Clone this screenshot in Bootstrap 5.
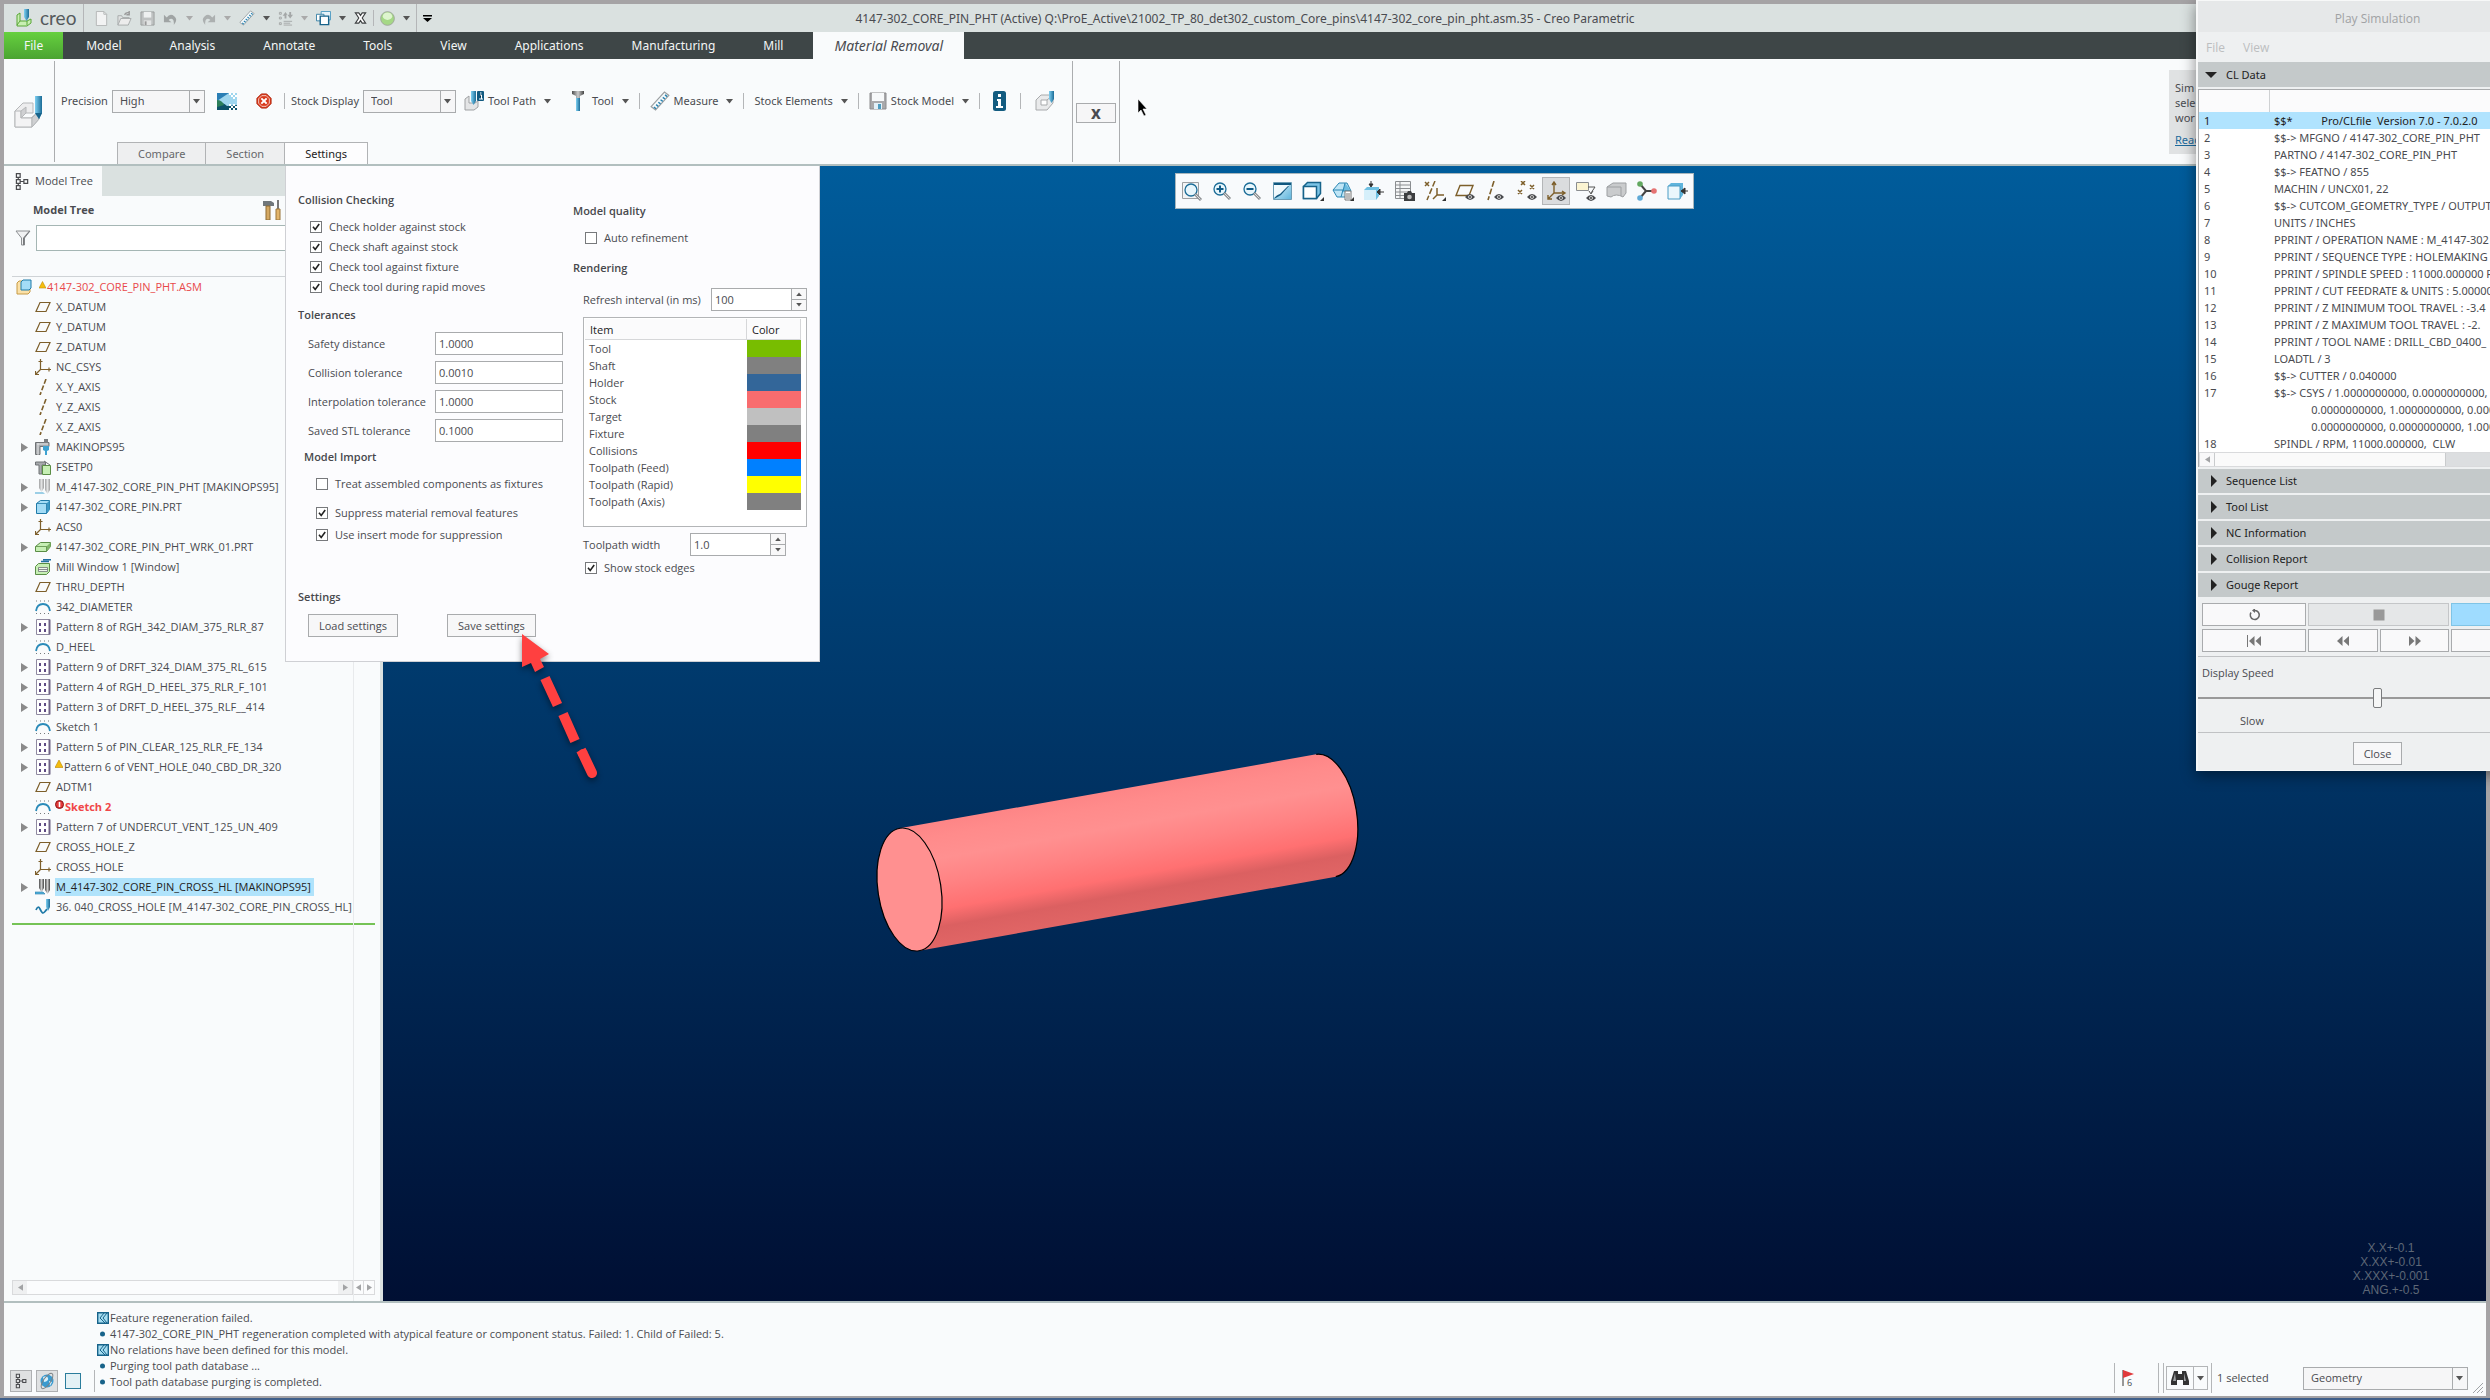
<!DOCTYPE html>
<html lang="en">
<head>
<meta charset="utf-8">
<meta name="viewport" content="width=device-width, initial-scale=1">
<title>4147-302_CORE_PIN_PHT (Active) - Creo Parametric</title>
<link rel="stylesheet" href="https://cdn.jsdelivr.net/npm/bootstrap@5.3.0/dist/css/bootstrap.min.css">
<style>
:root{--ink:#4a4b50;--line:#b3b5b7;--paper:#f9fbfc;--bar:#dae1e0;--small:11px}
html,body{height:100%}
body{font-family:"Open Sans","Noto Sans",sans-serif;font-size:var(--small);line-height:16px;color:var(--ink);background:#3f5f8a;overflow:hidden}
button,input,select{font:inherit;color:inherit}
svg{display:block;flex:none}
header,.cldata,.acc{font-family:"Noto Sans","Open Sans",sans-serif}
.frame{border:4px solid #a5a3a5;border-bottom-width:2px;background:var(--paper);height:100%}
.shell{padding-bottom:2px;height:100vh}
.plain{border:0;background:none;padding:0;display:flex;align-items:center}
.i15{width:15px;height:15px}.i16{width:16px;height:16px}.i20{width:20px;height:20px}
.caret{width:7px;height:5px;fill:#555}
.caret.dim{fill:#aaa}
.sep{width:1px;height:16px;background:#b4b6b8;flex:none}
/* title bar */
.titlebar{height:28px;background:var(--bar)}
.quick{gap:8px;padding-left:12px;flex:1 0 0}
.quick-end{padding-left:12px;flex:1 0 0}
.brand{font-family:Lato,"Open Sans",sans-serif;font-size:19px;line-height:24px;color:#555a5c;width:37px}
.titlebar .sep{height:28px;margin:0 -2px}
.titlebar .sep.short{height:16px}
.apptitle{font-size:12px;padding-top:1px}
/* menu */
.menubar{background:#3e4647;height:27px;font-size:12px}
.menubar a{color:#f4f6f6;text-decoration:none;padding:1px 24px 0;height:27px;display:flex;align-items:center}
.menubar a.filetab{background:linear-gradient(#66d03f,#4aa431);padding:1px 20px 0;margin-right:-1px}
.menubar a.current{background:var(--paper);color:var(--ink);font-style:italic;font-size:14px;padding:1px 21px 0;margin-left:6px}
/* ribbon */
.ribbon{height:107px;border-bottom:2px solid #b2bfbf}
.ribbon .vrule{width:1px;background:#abadaf;margin:2px 0;flex:none}
.tools{height:84px;padding-top:1px}
.pick{position:relative;display:inline-block}
.pick select{appearance:none;height:23px;border:1px solid #a9abad;border-radius:0;background:#f6f6f7;padding:0 24px 0 7px;width:100%;display:block}
.pick svg{position:absolute;right:5px;top:9px;pointer-events:none}
.pick::after{content:"";position:absolute;right:15px;top:1px;bottom:1px;width:1px;background:#a9abad}
.subtabs{padding-left:62px;height:22px}
.subtabs a{border:1px solid #b1b3b5;border-bottom:0;background:#eeeff0;color:#66676b;text-decoration:none;padding:1px 20px 0;margin-right:-1px;display:flex;align-items:center}
.subtabs a.current{background:#fdfdfe;color:#222}
.xbox{width:40px;height:20px;border:1px solid #a9abad;background:#f6f6f7;font-weight:700;font-size:17px;line-height:16px;padding:0;margin-top:44px}
.hint{background:#e0e2e3;width:317px;padding:10px 6px;margin:11px 0 10px;line-height:15px}
.hint a{color:#1d6a9c}
/* tree */
.side{width:379px;border-right:3px solid var(--bar);flex:none;position:relative}
.paneltab{width:98px;height:30px;padding-left:11px;gap:5px;background:var(--paper)}
.tabfill{background:var(--bar)}
.finder{height:26px;border:1px solid #a5b6b4;background:#fff;flex:1;min-width:0}
.treehead{border-bottom:1px solid #cfd3d6;margin-left:8px;height:26px}
.tree{list-style:none;margin:0;padding:0 0 0 17px}
.tree li{height:20px;display:flex;align-items:center;white-space:nowrap}
.tree .tw{width:14px;flex:none}
.tree .tw svg{width:7px;height:9px;fill:#8a8a8a}
.tree .i16{margin-right:4px}
.tree span.t{padding:0 3px 0 1px;line-height:18px}
.tree li.sel span.t{background:#b0e3fb;color:#222}
.tree li.root{margin-left:-5px;color:#e8494b}
.rule-green{height:2px;background:#76c356;margin:6px 5px 0 8px}
.colline{position:absolute;top:110px;bottom:0;right:26px;width:1px;background:#e8eaec}
.sb{height:15px;border:1px solid #d9dadc;background:#fbfcfd}
.sb button{width:14px;border:0;background:#eff0f1;padding:0;display:flex;align-items:center;justify-content:center}
.sb svg,.mini svg{width:5px;height:7px;fill:#a2a3a5}
.mini{width:12px;height:15px;border:1px solid #d9dadc;background:#fbfcfd;padding:0;display:flex;align-items:center;justify-content:center;margin-left:-1px}
/* viewport */
.viewport3d{position:relative;background:linear-gradient(#005c9b,#000f33);overflow:hidden}
.solid{position:absolute;left:480px;top:570px}
.viewbar{position:absolute;left:792px;top:7px;width:519px;height:36px;background:#f8fafc;border:1px solid #a8b6bc;padding:0 1px}
.viewbar button{width:29px;height:34px;justify-content:center}
.viewbar button.on>span{background:#dadcde;border:1px solid #b4b6b8}
.viewbar button>span{padding:3px 2px;border:1px solid transparent}
.viewbar svg{width:22px;height:20px}
.tols{position:absolute;right:47px;bottom:4px;width:96px;text-align:center;font:12px/14px "Liberation Sans",Arial,sans-serif;color:#5d6776}
/* settings panel */
.setpanel{position:absolute;left:285px;top:166px;width:535px;background:#fcfcfe;border:1px solid #cfd0d4;border-top:0;z-index:5;padding:0 12px 24px}
.setpanel h2{font-size:var(--small);line-height:20px;font-weight:600;margin:0;color:#47484c}
.ck{height:20px;display:flex;align-items:center;gap:7px;margin:0}
.ck input{appearance:none;width:12px;height:12px;border:1px solid #77797c;background:#fff;margin:0;flex:none}
.ck input:checked{background:#fff url("data:image/svg+xml,%3Csvg xmlns='http://www.w3.org/2000/svg' viewBox='0 0 10 10'%3E%3Cpath d='M2 4.8l2.2 2.6L8.2 2' fill='none' stroke='%23222' stroke-width='1.6'/%3E%3C/svg%3E")}
.fld{height:23px;border:1px solid #a9abad;background:#fff;border-radius:0;padding:0 3px;width:128px}
.tolrow{height:29px}
.tolrow label{width:127px}
.spin{width:96px;height:23px}
.spin input{width:81px}
.spin button{width:16px;height:12px;border:1px solid #a9abad;background:#f8f8f9;padding:0;display:flex;align-items:center;justify-content:center}
.spin button+button{margin-top:-1px}
.spin svg{width:6px;height:4px;fill:#555}
.btnflat{height:23px;border:1px solid #a9abad;background:#f7f7f8;padding:0 10px;border-radius:0;white-space:nowrap}
.listbox{border:1px solid #b3b5b7;background:#fff;height:210px;padding:1px 5px 0 1px}
.listbox table{width:100%;border-collapse:collapse;line-height:17px}
.listbox th{font-weight:400;color:#222;height:20px;border-right:1px solid #d6d7d9;border-bottom:1px solid #d6d7d9;background:#fbfbfc;padding:1px 5px 0}
.listbox td{padding:0 4px;height:17px}
.sw{width:54px}
.cw0{background:#78bd00}.cw1{background:#808080}.cw2{background:#336699}.cw3{background:#f86c6e}.cw4{background:#c0c0c0}.cw5{background:#f00}.cw6{background:#0080ff}.cw7{background:#ff0}
/* play simulation dialog */
.stage{position:absolute;inset:0;overflow:hidden;pointer-events:none;z-index:6}
.dlg{position:absolute;left:2196px;top:0;width:362px;pointer-events:auto;background:#eef0f1;border:1px solid #f7f8f8;border-left-width:2px;box-shadow:0 4px 14px rgba(0,0,0,.45);padding-bottom:5px}
.dlg .cap{height:31px;background:#e6e8e9;color:#a0a2a4;font-size:12px;padding-top:5px}
.dlg .mn{height:30px;gap:18px;padding:2px 0 0 8px;color:#bcbec0;font-size:12px}
.acc{height:24px;background:#c4c9ca;border:0;padding:0 0 0 9px;gap:7px;width:100%;color:#222;margin-top:2px;display:flex;align-items:center}
.acc.opened{height:25px;margin-top:0;padding-left:7px;gap:9px}
.acc svg{width:12px;height:12px;fill:#222}
.cldata{border:1px solid #a9abad;margin-top:2px;background:#fff;height:378px}
.cldata table{border-collapse:collapse;white-space:pre;width:100%;line-height:17px}
.cldata th{height:22px;background:#fbfbfc;border-right:1px solid #cfd1d3;padding:0}
.cldata td{height:17px;padding:0 5px}
.cldata tr.sel td{background:#b0e3fe;color:#222}
.cldata .num{width:70px}
.play{display:grid;grid-template-columns:104px 70px 69px 104px;gap:3px 2px;padding:6px 4px 4px}
.play button{height:23px;border:1px solid #a9abad;background:#f9f9fa;padding:0;display:flex;align-items:center;justify-content:center}
.play svg{width:16px;height:12px;fill:#777}
.play .stop{grid-column:span 2;background:#e5e7e8;border-color:#c4c6c8}
.play .go{background:#9fdcff;border-color:#7fc4e6}
.hair{height:1px;background:#c0c2c4}
.speed{appearance:none;width:100%;height:20px;background:linear-gradient(#999,#999) center/100% 2px no-repeat;margin:0;display:block}
.speed::-webkit-slider-thumb{appearance:none;width:9px;height:20px;border:1px solid #7a7c7e;border-radius:2px;background:#f6f7f7}
.callout{position:absolute;left:512px;top:628px;z-index:7;filter:drop-shadow(0 3px 3px rgba(0,0,0,.45));pointer-events:none}
.mouse{position:absolute;left:1137px;top:99px;z-index:7}
/* footer */
.foot{height:95px;border-top:2px solid #b2bfbf}
.msgs{list-style:none;margin:0 0 0 2px;padding:7px 0 0;line-height:16px}
.msgs li{display:flex;align-items:center;height:16px;gap:1px}
.msgs svg{width:12px;height:12px}
.tog{width:22px;height:22px;border:1px solid #aeb0b2;background:#dfe1e2;padding:0;display:flex;align-items:center;justify-content:center}
.foot .sep{height:30px}
.findbtn{height:24px;width:28px;border:1px solid #b3b5b7}
.findbtn+.findbtn{width:15px;margin-left:-1px}
</style>
<script src="https://cdn.jsdelivr.net/npm/bootstrap@5.3.0/dist/js/bootstrap.bundle.min.js"></script>
</head>
<body>
<svg width="0" height="0" class="position-absolute" aria-hidden="true">
<defs>
<linearGradient id="gb" x1="0" y1="0" x2="1" y2="1"><stop offset="0" stop-color="#e4f6fd"/><stop offset="1" stop-color="#5db4dc"/></linearGradient>
<linearGradient id="gx" x1="0" x2="1"><stop offset="0" stop-color="#7fd0f2"/><stop offset="1" stop-color="#1b6c97"/></linearGradient>
<linearGradient id="gm" x1="0" x2="1"><stop offset="0" stop-color="#4d4d4d"/><stop offset=".5" stop-color="#ccc"/><stop offset="1" stop-color="#444"/></linearGradient>
</defs>
<symbol id="dn" viewBox="0 0 7 5"><path d="M0 0h7L3.500 4.500z"/></symbol>
<symbol id="up" viewBox="0 0 7 5"><path d="M0 5h7L3.500 .5z"/></symbol>
<symbol id="rt" viewBox="0 0 7 9"><path d="M0 0l7 4.500L0 9z"/></symbol>
<symbol id="lf" viewBox="0 0 7 9"><path d="M7 0L0 4.500 7 9z"/></symbol>
<symbol id="logo" viewBox="0 0 16 18"><path d="M1 6l3-2v8h7l4-2v4l-4 3H1z" fill="#c9efb3" stroke="#58a637"/><path d="M4 12l-3 4M11 12v4" stroke="#58a637"/><path d="M8 0h5v8l-2.500 4L8 8z" fill="url(#gx)"/></symbol>
<symbol id="doc" viewBox="0 0 16 16"><path d="M2.500.5h8l3 3v12h-11z" fill="#f2f3f3" stroke="#b3b6b6"/><path d="M10.500.5v3h3" fill="none" stroke="#b3b6b6"/></symbol>
<symbol id="open" viewBox="0 0 16 16"><path d="M1 15V5h4l1 2h7v2" fill="#dfe1e1" stroke="#a8abab"/><path d="M1 15l3-7h11l-3 7z" fill="#ececec" stroke="#a8abab"/><path d="M8 4q2-3 5-2M13 0v4h-3" fill="none" stroke="#999" stroke-width="1.500"/></symbol>
<symbol id="save" viewBox="0 0 16 16"><path d="M1 1h14v14H1z" fill="#bfc2c2" stroke="#9a9d9d"/><path d="M4 1h8v6H4z" fill="#eef0f0"/><path d="M4 10h8v5H4z" fill="#e2e4e4"/><path d="M5 11h2v4H5z" fill="#999"/></symbol>
<symbol id="floppy" viewBox="0 0 18 18"><path d="M1 1h16v16H1z" fill="#a9a9ab" stroke="#8c8c8e"/><path d="M3 1h12v8H3z" fill="#f7f9fa"/><path d="M5 11h8v6H5z" fill="#e2f0f7"/><path d="M9 12h3v5H9z" fill="#4d9cc0"/></symbol>
<symbol id="undo" viewBox="0 0 16 16"><path d="M1 4v8h8L6 9.500Q8 7.500 10 8.500t1.500 6.500Q16.500 9 12 5.500T4 7z" fill="#a0a4a4"/></symbol>
<symbol id="redo" viewBox="0 0 16 16"><path d="M15 4v8H7l3-2.500Q8 7.500 6 8.500T4.500 15Q-.5 9 4 5.500T12 7z" fill="#acb0b0"/></symbol>
<symbol id="ruler" viewBox="0 0 18 18"><path d="M1 14L13 1l4 3L5 17z" fill="#f5fafc" stroke="#9b9fa1"/><path d="M5.500 16l-2-1.500M7.500 13.800l-2-1.500M9.500 11.600l-2-1.500M11.500 9.400l-2-1.500M13.500 7.200l-2-1.500M15.500 5l-2-1.500" stroke="#2a83b0" stroke-width="1.300"/></symbol>
<symbol id="regen" viewBox="0 0 16 16"><g fill="none" stroke="#a4a7a7"><path d="M1.500 1.500h2v2h-2zM1.500 6.500h2v2h-2zM1.500 12.500h2v2h-2zM6 11h9M6 13h7M6 15h9"/></g><path d="M5 5l3-4 2 3h-1v4H7V5zM10 4l3 4 3-4h-2V1h-2v3z" fill="#a4a7a7"/></symbol>
<symbol id="wins" viewBox="0 0 16 16"><path d="M5.500.5h10v9h-10z" fill="#e7f3f9" stroke="#4d9ac0"/><path d="M.5 3.500h8v7h-8z" fill="#fff" stroke="#357fa4"/><path d="M4.500 5.500h9v9h-9z" fill="#fff" stroke="#17638a" stroke-width="1.500"/></symbol>
<symbol id="xdbl" viewBox="0 0 14 14"><path d="M1 1h4l2 3 2-3h4L9 7l4 6H9L7 10l-2 3H1l4-6z" fill="#fff" stroke="#3c3f40" stroke-width="1.300"/></symbol>
<symbol id="glow" viewBox="0 0 16 16"><circle cx="8" cy="8" r="7.300" fill="#a5d886" stroke="#9ea69a"/><ellipse cx="8" cy="5.500" rx="5" ry="4" fill="#e8fadb" opacity=".85"/></symbol>
<symbol id="custom" viewBox="0 0 9 7"><path d="M0 0h9v1.500H0zM0 3h9L4.500 7z"/></symbol>
<symbol id="mill" viewBox="0 0 28 32"><path d="M1 15l8-8h10v10h-8l-4 5h10l8-7v8l-7 8H1z" fill="#ededee" stroke="#b5b7b9"/><path d="M1 15h6v7h11v9H1z" fill="#f3f3f4" stroke="#b5b7b9"/><path d="M18 22v9l7-8v-8zM7 15l5-4v6l-5 5z" fill="#cfd0d2" stroke="#b5b7b9"/><path d="M21 0h7v17l-3 6-4-6z" fill="url(#gx)"/><path d="M21 17h7l-3 6z" fill="#17638a"/></symbol>
<symbol id="milli" viewBox="0 0 20 20"><path d="M1 8l4-3v7h6l3-2v6l-4 3H1z" fill="#e4e5e6" stroke="#9fa1a3"/><path d="M7 0h5v10l-2.500 4L7 10z" fill="url(#gx)"/><rect x="13" width="7" height="10" rx="1" fill="#125a80"/><path d="M16 2h1.500M16 4h1.500v4M15 8h4" stroke="#fff"/></symbol>
<symbol id="millg" viewBox="0 0 20 20"><path d="M1 9l5-5h12v8l-6 7H1z" fill="#e9eaeb" stroke="#a8aaac"/><path d="M6 9h6v5H6zM12 9l6-5" fill="#fff" stroke="#a8aaac"/><path d="M14 0h5v8l-2.500 4L14 8z" fill="url(#gx)"/></symbol>
<symbol id="scene" viewBox="0 0 20 17"><path d="M0 0h20v17H0z" fill="#9fd6ee"/><path d="M0 0h12L0 8z" fill="#2b7fb5"/><path d="M0 9q6 0 10 4l10-1v5H0z" fill="#0e5268"/><path d="M0 7q5 0 7 5l-7 2z" fill="#2c7f5a"/><path d="M12 0h2v2h-2zM16 0h2v2h-2zM14 2h2v2h-2zM18 2h2v2h-2zM16 4h2v2h-2zM12 11h2v2h-2zM16 11h2v2h-2zM14 13h2v2h-2zM18 13h2v2h-2zM12 15h2v2h-2zM16 15h2v2h-2z" fill="#fff"/></symbol>
<symbol id="stopx" viewBox="0 0 18 18"><path d="M6 1h6l5 5v6l-5 5H6l-5-5V6z" fill="#d93a1c" stroke="#b02a12"/><path d="M6.500 3h5L15 6.500v5L11.500 15h-5L3 11.500v-5z" fill="none" stroke="#fff" stroke-width=".8"/><path d="M6 6l6 6M12 6l-6 6" stroke="#fff" stroke-width="2.200"/></symbol>
<symbol id="bolt" viewBox="0 0 12 20"><path d="M0 0h12v3L8 5v2H4V5L0 3z" fill="url(#gm)"/><path d="M4 7h4v13H4z" fill="url(#gx)"/></symbol>
<symbol id="info" viewBox="0 0 13 20"><rect width="13" height="20" rx="2.500" fill="#135c80"/><path d="M5 3h3v3H5zM4 8h4v7h2v2H3v-2h2v-5H4z" fill="#fff"/></symbol>
<symbol id="orgtree" viewBox="0 0 16 20"><path d="M1.500 1.500h4v4h-4zM1.500 8h4v4h-4zM1.500 14.500h4v4h-4zM9.500 8h4v4h-4zM3.500 5.500V8M3.500 12v2.500M5.500 10h4" fill="none" stroke="#4a4b4e" stroke-width="1.300"/></symbol>
<symbol id="hammers" viewBox="0 0 18 20"><path d="M0 1h8l3 2v3H0z" fill="#70777b"/><path d="M3 6h4v14H3z" fill="#d4a862" stroke="#8d6a32"/><path d="M14 0h2v9h-2z" fill="#777"/><path d="M13 9h4v11h-4z" fill="#e2b46a" stroke="#9a7438"/></symbol>
<symbol id="funnel" viewBox="0 0 16 16"><path d="M1 1h14L9.500 8v7h-3V8z" fill="#f0f1f2" stroke="#8d9093"/><path d="M8 8l6-7h1L9.500 8v7H8z" fill="#77797c"/></symbol>
<symbol id="asm" viewBox="0 0 16 16"><path d="M1 4l2-2h11v11l-2 2H1z" fill="#fbe1a8" stroke="#c69a45"/><path d="M5 3l2-2h8v8l-2 2H5z" fill="#a3dcf6" stroke="#1f7aa8"/></symbol>
<symbol id="warn" viewBox="0 0 8 8"><path d="M4 0l4 7.500H0z" fill="#f5bd0e" stroke="#b88600" stroke-width=".6"/></symbol>
<symbol id="err" viewBox="0 0 9 9"><circle cx="4.500" cy="4.500" r="4" fill="#e23a3a" stroke="#8e1414"/><path d="M3.700 2h1.600v5H3.700z" fill="#fff"/></symbol>
<symbol id="plane" viewBox="0 0 16 16"><path d="M5 3.500h10l-4 9H1z" fill="none" stroke="#7d5f2b" stroke-width="1.200"/></symbol>
<symbol id="csys" viewBox="0 0 16 16"><path d="M5.500 0v10.500H16M5.500 10.500L1 15M3.500 2.500h4M14 8.500v4M.5 12v3.500H4" fill="none" stroke="#7d5f2b" stroke-width="1.200"/></symbol>
<symbol id="axis" viewBox="0 0 16 16"><path d="M11 0L5 16" stroke="#7d5f2b" stroke-width="1.600" stroke-dasharray="5 2"/></symbol>
<symbol id="mach" viewBox="0 0 16 16"><path d="M.5 3.500H14v4H5v8H.5z" fill="#a7aaad" stroke="#6f7275"/><path d="M3 4v12M2 5h11" stroke="#e5e6e7"/><path d="M9 0h4v4H9z" fill="#7b7e81"/><path d="M8 7h6v4l-2 1v4h-2v-4l-2-1z" fill="#3ea2d1"/></symbol>
<symbol id="fset" viewBox="0 0 16 16"><path d="M.5 3h10v3H7v9H4V6H.5z" fill="#a7aaad" stroke="#6f7275"/><path d="M9 2l6 4" stroke="#6f7275"/><path d="M7.500 6.500h8v9h-8z" fill="#c6efb4" stroke="#5a8d45"/></symbol>
<symbol id="oper" viewBox="0 0 16 16"><path d="M4 0h5v9l-2.500 4L4 9z" fill="url(#gm)"/><path d="M10 0h5v11l-2.500 4L10 11z" fill="url(#gm)"/><path d="M0 13h8l2 2H0z" fill="#58b4dd" stroke="#1f7aa8" stroke-width=".6"/></symbol>
<symbol id="operd" viewBox="0 0 16 16"><g opacity=".5"><path d="M4 0h5v9l-2.500 4L4 9z" fill="url(#gm)"/><path d="M10 0h5v11l-2.500 4L10 11z" fill="url(#gm)"/></g><path d="M0 13h8l2 2H0z" fill="#9ccfe6"/></symbol>
<symbol id="cube" viewBox="0 0 16 16"><path d="M1.500 4.500l4-3h9v9l-3 4h-10z" fill="#a3dcf6" stroke="#1f7aa8"/><path d="M11.500 4.500l3-3v9l-3 4z" fill="#3b97c4"/><path d="M1.500 4.500h10v10" fill="none" stroke="#1f7aa8" stroke-width=".8"/></symbol>
<symbol id="gcube" viewBox="0 0 16 16"><path d="M.5 7.500l5-4h10v4l-4 5H.5z" fill="#c6efb4" stroke="#5a8d45"/><path d="M11.500 7.500l4-4v4l-4 5z" fill="#7fb668"/><path d="M.5 7.500h11v5" fill="none" stroke="#5a8d45" stroke-width=".8"/></symbol>
<symbol id="mwin" viewBox="0 0 16 16"><path d="M6 2.500h8M8 .8h8" stroke="#1f6fa0" stroke-width="1.600"/><path d="M.5 7.500l3-3h11v8l-3 3H.5z" fill="#c6efb4" stroke="#5a8d45"/><path d="M3.500 8.500h9v4h-9zM3.500 10.500h9" fill="#f1f8ee" stroke="#6f7275" stroke-width=".8"/></symbol>
<symbol id="sk" viewBox="0 0 16 16"><path d="M1 12Q2 5 8 5t7 7" fill="none" stroke="#2a8ab8" stroke-width="1.800"/><path d="M1 2h14M1 14.500h14" stroke="#777a7d" stroke-dasharray="1 3"/></symbol>
<symbol id="pat" viewBox="0 0 16 16"><path d="M1.500.5h13v15h-13z" fill="#fff" stroke="#8f89a0"/><path d="M14.500.5v15" stroke="#6f6487" stroke-width="2"/><path d="M4 4h2v3H4zM9 4h2v3H9zM4 10h2v3H4zM9 10h2v3H9z" fill="#5f4c84"/></symbol>
<symbol id="seq" viewBox="0 0 16 16"><path d="M1 11q2-5 4-1t3 4 4-4" fill="none" stroke="#1f7aa8" stroke-width="1.700"/><path d="M11 0h4v8l-2 4-2-4z" fill="url(#gx)"/></symbol>
<symbol id="mag" viewBox="0 0 22 20"><circle cx="9" cy="8" r="6" fill="#e8f6fc" stroke="#1b6c97" stroke-width="1.300"/><path d="M13 12l6 6" stroke="#8d9093" stroke-width="3"/><path d="M13.500 12.500l5 5" stroke="#dcdee0"/></symbol>
<symbol id="eye" viewBox="0 0 10 6"><path d="M0 3q5-6 10 0-5 6-10 0z" fill="#4a4b4e"/><circle cx="5" cy="3" r="1.800" fill="#fff"/><circle cx="5" cy="3" r=".9" fill="#222"/></symbol>
<symbol id="bino" viewBox="0 0 18 16"><path d="M3 1h4v3h4V1h4l3 10v4h-6v-5H6v5H0v-4z" fill="#333"/><path d="M4 3l-2 8h3zM13 3l2 8h-2z" fill="#9b9ea0"/></symbol>
</svg>

<div class="shell">
<div class="frame d-flex flex-column">
<header>
  <div class="titlebar d-flex align-items-center">
    <div class="quick d-flex align-items-center">
      <svg width="16" height="18"><use href="#logo"/></svg><span class="brand">creo</span>
      <i class="sep"></i>
      <button class="plain ms-1" aria-label="New"><svg class="i15"><use href="#doc"/></svg></button>
      <button class="plain" aria-label="Open"><svg class="i15"><use href="#open"/></svg></button>
      <button class="plain" aria-label="Save"><svg class="i15"><use href="#save"/></svg></button>
      <button class="plain" aria-label="Undo"><svg class="i15"><use href="#undo"/></svg></button>
      <button class="plain" aria-label="Undo list"><svg class="caret dim"><use href="#dn"/></svg></button>
      <button class="plain" aria-label="Redo"><svg class="i15"><use href="#redo"/></svg></button>
      <button class="plain" aria-label="Redo list"><svg class="caret dim"><use href="#dn"/></svg></button>
      <button class="plain" aria-label="Measure"><svg class="i16"><use href="#ruler"/></svg></button>
      <button class="plain" aria-label="Measure list"><svg class="caret"><use href="#dn"/></svg></button>
      <button class="plain" aria-label="Regenerate"><svg class="i15"><use href="#regen"/></svg></button>
      <button class="plain" aria-label="Regenerate list"><svg class="caret dim"><use href="#dn"/></svg></button>
      <button class="plain" aria-label="Windows"><svg class="i15"><use href="#wins"/></svg></button>
      <button class="plain" aria-label="Windows list"><svg class="caret"><use href="#dn"/></svg></button>
      <button class="plain" aria-label="Close window"><svg width="13" height="12"><use href="#xdbl"/></svg></button>
      <i class="sep short"></i>
      <button class="plain" aria-label="Status"><svg class="i15"><use href="#glow"/></svg></button>
      <button class="plain" aria-label="Status list"><svg class="caret"><use href="#dn"/></svg></button>
      <i class="sep"></i>
      <button class="plain" aria-label="Customize"><svg width="9" height="7"><use href="#custom"/></svg></button>
    </div>
    <div class="apptitle">4147-302_CORE_PIN_PHT (Active) Q:\ProE_Active\21002_TP_80_det302_custom_Core_pins\4147-302_core_pin_pht.asm.35 - Creo Parametric</div>
    <div class="quick-end"></div>
  </div>
  <nav class="menubar d-flex">
    <a class="filetab" href="#">File</a><a href="#">Model</a><a href="#">Analysis</a><a href="#">Annotate</a><a href="#">Tools</a><a href="#">View</a><a href="#">Applications</a><a href="#">Manufacturing</a><a href="#">Mill</a><a class="current" href="#">Material Removal</a>
  </nav>
  <div class="ribbon d-flex">
    <div class="d-flex align-items-center" style="width:50px;padding-left:10px"><svg width="28" height="32"><use href="#mill"/></svg></div>
    <i class="vrule"></i>
    <div class="d-flex flex-column">
      <div class="tools d-flex align-items-center text-nowrap">
        <label for="prec" style="margin-left:6px">Precision</label>
        <span class="pick ms-1" style="width:93px"><select id="prec"><option>High</option></select><svg class="caret"><use href="#dn"/></svg></span>
        <button class="plain" aria-label="Render" style="margin-left:12px"><svg width="20" height="17"><use href="#scene"/></svg></button>
        <button class="plain" aria-label="Stop" style="margin-left:19px"><svg class="i16"><use href="#stopx"/></svg></button>
        <i class="sep" style="margin:0 6px 0 12px"></i>
        <label for="stk">Stock Display</label>
        <span class="pick ms-1" style="width:93px"><select id="stk"><option>Tool</option></select><svg class="caret"><use href="#dn"/></svg></span>
        <button class="plain ms-2"><svg class="i20 me-1"><use href="#milli"/></svg>Tool Path<svg class="caret ms-2"><use href="#dn"/></svg></button>
        <button class="plain" style="margin-left:21px"><svg width="12" height="20" class="me-2"><use href="#bolt"/></svg>Tool<svg class="caret ms-2"><use href="#dn"/></svg></button>
        <i class="sep" style="margin:0 10px"></i>
        <button class="plain"><svg class="i20 me-1"><use href="#ruler"/></svg>Measure<svg class="caret ms-2"><use href="#dn"/></svg></button>
        <i class="sep" style="margin:0 10px"></i>
        <button class="plain">Stock Elements<svg class="caret ms-2"><use href="#dn"/></svg></button>
        <i class="sep" style="margin:0 10px"></i>
        <button class="plain"><svg width="18" height="18" class="me-1"><use href="#floppy"/></svg>Stock Model<svg class="caret ms-2"><use href="#dn"/></svg></button>
        <i class="sep" style="margin:0 13px 0 10px"></i>
        <button class="plain" aria-label="Information"><svg width="13" height="20"><use href="#info"/></svg></button>
        <i class="sep" style="margin:0 14px 0 14px"></i>
        <button class="plain" aria-label="Material removal"><svg class="i20"><use href="#millg"/></svg></button>
      </div>
      <nav class="subtabs d-flex"><a href="#">Compare</a><a href="#">Section</a><a class="current" href="#">Settings</a></nav>
    </div>
    <i class="vrule" style="margin-left:17px"></i>
    <div style="padding:0 3px"><button class="xbox" aria-label="Close tab">x</button></div>
    <i class="vrule"></i>
    <div class="hint ms-auto">Sim<br>sele<br>wor<div style="margin-top:7px"><a href="#">Read</a></div></div>
  </div>
</header>

<main class="d-flex flex-grow-1" style="min-height:0">
  <aside class="side d-flex flex-column">
    <div class="tabfill"><div class="paneltab d-flex align-items-center"><svg width="15" height="19"><use href="#orgtree"/></svg>Model Tree</div></div>
    <div class="d-flex align-items-center fw-bold" style="height:29px;padding:0 0 2px 29px"><span style="width:230px">Model Tree</span><button class="plain" aria-label="Tree settings"><svg width="18" height="20"><use href="#hammers"/></svg></button></div>
    <div class="d-flex align-items-center" style="padding-left:11px;gap:5px"><svg class="i16"><use href="#funnel"/></svg><input class="finder" aria-label="Filter tree"></div>
    <div class="treehead"></div>
    <ul class="tree">
      <li class="root"><svg class="i16" style="margin-right:7px"><use href="#asm"/></svg><svg width="7" height="8" style="margin-bottom:5px"><use href="#warn"/></svg><span class="t">4147-302_CORE_PIN_PHT.ASM</span></li>
      <li><i class="tw"></i><svg class="i16"><use href="#plane"/></svg><span class="t">X_DATUM</span></li>
      <li><i class="tw"></i><svg class="i16"><use href="#plane"/></svg><span class="t">Y_DATUM</span></li>
      <li><i class="tw"></i><svg class="i16"><use href="#plane"/></svg><span class="t">Z_DATUM</span></li>
      <li><i class="tw"></i><svg class="i16"><use href="#csys"/></svg><span class="t">NC_CSYS</span></li>
      <li><i class="tw"></i><svg class="i16"><use href="#axis"/></svg><span class="t">X_Y_AXIS</span></li>
      <li><i class="tw"></i><svg class="i16"><use href="#axis"/></svg><span class="t">Y_Z_AXIS</span></li>
      <li><i class="tw"></i><svg class="i16"><use href="#axis"/></svg><span class="t">X_Z_AXIS</span></li>
      <li><i class="tw"><svg><use href="#rt"/></svg></i><svg class="i16"><use href="#mach"/></svg><span class="t">MAKINOPS95</span></li>
      <li><i class="tw"></i><svg class="i16"><use href="#fset"/></svg><span class="t">FSETP0</span></li>
      <li><i class="tw"><svg><use href="#rt"/></svg></i><svg class="i16"><use href="#operd"/></svg><span class="t">M_4147-302_CORE_PIN_PHT [MAKINOPS95]</span></li>
      <li><i class="tw"><svg><use href="#rt"/></svg></i><svg class="i16"><use href="#cube"/></svg><span class="t">4147-302_CORE_PIN.PRT</span></li>
      <li><i class="tw"></i><svg class="i16"><use href="#csys"/></svg><span class="t">ACS0</span></li>
      <li><i class="tw"><svg><use href="#rt"/></svg></i><svg class="i16"><use href="#gcube"/></svg><span class="t">4147-302_CORE_PIN_PHT_WRK_01.PRT</span></li>
      <li><i class="tw"></i><svg class="i16"><use href="#mwin"/></svg><span class="t">Mill Window 1 [Window]</span></li>
      <li><i class="tw"></i><svg class="i16"><use href="#plane"/></svg><span class="t">THRU_DEPTH</span></li>
      <li><i class="tw"></i><svg class="i16"><use href="#sk"/></svg><span class="t">342_DIAMETER</span></li>
      <li><i class="tw"><svg><use href="#rt"/></svg></i><svg class="i16"><use href="#pat"/></svg><span class="t">Pattern 8 of RGH_342_DIAM_375_RLR_87</span></li>
      <li><i class="tw"></i><svg class="i16"><use href="#sk"/></svg><span class="t">D_HEEL</span></li>
      <li><i class="tw"><svg><use href="#rt"/></svg></i><svg class="i16"><use href="#pat"/></svg><span class="t">Pattern 9 of DRFT_324_DIAM_375_RL_615</span></li>
      <li><i class="tw"><svg><use href="#rt"/></svg></i><svg class="i16"><use href="#pat"/></svg><span class="t">Pattern 4 of RGH_D_HEEL_375_RLR_F_101</span></li>
      <li><i class="tw"><svg><use href="#rt"/></svg></i><svg class="i16"><use href="#pat"/></svg><span class="t">Pattern 3 of DRFT_D_HEEL_375_RLF__414</span></li>
      <li><i class="tw"></i><svg class="i16"><use href="#sk"/></svg><span class="t">Sketch 1</span></li>
      <li><i class="tw"><svg><use href="#rt"/></svg></i><svg class="i16"><use href="#pat"/></svg><span class="t">Pattern 5 of PIN_CLEAR_125_RLR_FE_134</span></li>
      <li><i class="tw"><svg><use href="#rt"/></svg></i><svg class="i16"><use href="#pat"/></svg><svg width="8" height="8" style="margin-bottom:6px"><use href="#warn"/></svg><span class="t">Pattern 6 of VENT_HOLE_040_CBD_DR_320</span></li>
      <li><i class="tw"></i><svg class="i16"><use href="#plane"/></svg><span class="t">ADTM1</span></li>
      <li><i class="tw"></i><svg class="i16"><use href="#sk"/></svg><svg width="9" height="9" style="margin-bottom:5px"><use href="#err"/></svg><span class="t fw-bold" style="color:#f04749">Sketch 2</span></li>
      <li><i class="tw"><svg><use href="#rt"/></svg></i><svg class="i16"><use href="#pat"/></svg><span class="t">Pattern 7 of UNDERCUT_VENT_125_UN_409</span></li>
      <li><i class="tw"></i><svg class="i16"><use href="#plane"/></svg><span class="t">CROSS_HOLE_Z</span></li>
      <li><i class="tw"></i><svg class="i16"><use href="#csys"/></svg><span class="t">CROSS_HOLE</span></li>
      <li class="sel"><i class="tw"><svg><use href="#rt"/></svg></i><svg class="i16"><use href="#oper"/></svg><span class="t">M_4147-302_CORE_PIN_CROSS_HL [MAKINOPS95]</span></li>
      <li><i class="tw"></i><svg class="i16"><use href="#seq"/></svg><span class="t">36. 040_CROSS_HOLE [M_4147-302_CORE_PIN_CROSS_HL]</span></li>
    </ul>
    <div class="rule-green"></div>
    <i class="colline"></i>
    <div class="mt-auto d-flex" style="padding:0 5px 6px 8px">
      <div class="sb d-flex flex-grow-1 justify-content-between"><button aria-label="Scroll left"><svg><use href="#lf"/></svg></button><button aria-label="Scroll right"><svg><use href="#rt"/></svg></button></div>
      <button class="mini" aria-label="Previous column"><svg><use href="#lf"/></svg></button><button class="mini" aria-label="Next column"><svg><use href="#rt"/></svg></button>
    </div>
  </aside>

  <section class="viewport3d flex-grow-1">
    <div class="viewbar d-flex align-items-center justify-content-between">
      <button class="plain" aria-label="Refit"><span><svg><path d="M1.500 1.500h16v16h-16z" fill="#f3f4f5" stroke="#9da0a3"/><use href="#mag" x="1" y="1"/></svg></span></button>
      <button class="plain" aria-label="Zoom in"><span><svg><use href="#mag"/><path d="M5.500 8h7M9 4.500v7" stroke="#0f5b87" stroke-width="2"/></svg></span></button>
      <button class="plain" aria-label="Zoom out"><span><svg><use href="#mag"/><path d="M5.500 8h7" stroke="#0f5b87" stroke-width="2"/></svg></span></button>
      <button class="plain" aria-label="Repaint"><span><svg><path d="M1.500 1.500h18v17h-18z" fill="url(#gb)" stroke="#6d9db5"/><path d="M2 4h15Q11 14 2 16z" fill="#fff" opacity=".8"/><path d="M2 2h17v2H2z" fill="#10577f"/><path d="M17 5L9 14l-7 4q2-4 6-5L16 5z" fill="#10577f"/></svg></span></button>
      <button class="plain" aria-label="Display style"><span><svg><path d="M1.500 5.500l4-4h13v11l-4 5h-13z" fill="#7cc4e6" stroke="#17638a" stroke-width="1.500"/><path d="M1.500 5.500h13v12h-13z" fill="#fff" stroke="#17638a" stroke-width="1.500"/><path d="M22 16v4h-4z" fill="#333"/></svg></span></button>
      <button class="plain" aria-label="Saved orientations"><span><svg><path d="M1 9l6-7h8l4 8-5 6H5z" fill="#bfe5f6" stroke="#2a86b3"/><path d="M13 2l-2 8h8z" fill="#6cbce0"/><path d="M13 2l-2 8h8M1 9h10l-2 7" fill="none" stroke="#2a86b3"/><path d="M13 10h6v9h-6z" fill="#fff" stroke="#777"/><path d="M14 13h4M14 15h4M14 17h4" stroke="#777"/><path d="M22 16v4h-4z" fill="#333"/></svg></span></button>
      <button class="plain" aria-label="View normal"><span><svg><path d="M1 9l3-3h12v9l-3 4H1z" fill="#6fc0e2"/><path d="M1 9h12v10H1z" fill="#d5effa"/><path d="M8 0v5M6 3l2 3 2-3zM21 11h-6M17 8l-3 3 3 3z" stroke="#333" fill="#333"/></svg></span></button>
      <button class="plain" aria-label="View manager"><span><svg><path d="M2.500.5h15v17h-15zM2.500 4h15M2.500 7.500h15M2.500 11h15M2.500 14.500h15M7 .5v17" fill="#f5f6f7" stroke="#8a8d90"/><path d="M11 12h3l1-2h3l1 2h3v8H11z" fill="#3c3e40"/><circle cx="16.500" cy="16" r="2.300" fill="#bbb"/></svg></span></button>
      <button class="plain" aria-label="Datum display"><span><svg fill="none" stroke="#7d5f2b" stroke-width="1.500"><path d="M1 1l4 4M5 1L1 5M11 0L3 19" stroke-dasharray="6 2"/><path d="M13 7v7h7M13 14l-4 4"/><path d="M22 16v4h-4z" fill="#333" stroke="none"/></svg></span></button>
      <button class="plain" aria-label="Plane display"><span><svg><path d="M6 4.500h13l-4 10H2z" fill="none" stroke="#7d5f2b" stroke-width="1.400"/><use href="#eye" x="11" y="13" width="10" height="6"/></svg></span></button>
      <button class="plain" aria-label="Axis display"><span><svg><path d="M10 0L4 19" stroke="#7d5f2b" stroke-width="1.600" stroke-dasharray="6 2"/><use href="#eye" x="10" y="13" width="10" height="6"/></svg></span></button>
      <button class="plain" aria-label="Point display"><span><svg><path d="M6 0l4 4M10 0L6 4M15 4l4 4M19 4l-4 4M3 9l4 4M7 9l-4 4" stroke="#7d5f2b" stroke-width="1.500"/><use href="#eye" x="12" y="13" width="10" height="6"/></svg></span></button>
      <button class="plain on" aria-label="Csys display"><span><svg><path d="M9 1v11h11M9 12l-6 6M7 4l2-3 2 3M17 10l3 2-3 2M3 14v4h4" fill="none" stroke="#7d5f2b" stroke-width="1.400"/><use href="#eye" x="11" y="14" width="10" height="6"/></svg></span></button>
      <button class="plain" aria-label="Annotation display"><span><svg><path d="M1.500 1.500h12v8h-12z" fill="#fbf4d2" stroke="#8a8d90"/><path d="M13 6h7l-4 6M14 10l2 3 2-3" fill="none" stroke="#555"/><use href="#eye" x="11" y="14" width="10" height="6"/></svg></span></button>
      <button class="plain" aria-label="Section"><span><svg><path d="M1 6l6-4h13v10l-3 4q-7-4-12 0l-4-1z" fill="#c9cbcd" stroke="#9da0a3"/><path d="M1 6h14v9" fill="none" stroke="#9da0a3"/></svg></span></button>
      <button class="plain" aria-label="Spin center"><span><svg><path d="M4 3l6 7h8M10 10l-6 7" fill="none" stroke="#444" stroke-width="2"/><circle cx="4" cy="3" r="2.800" fill="#62a860"/><circle cx="18" cy="10" r="2.800" fill="#e57373"/><circle cx="4" cy="17" r="2.800" fill="#5fa9d6"/></svg></span></button>
      <button class="plain" aria-label="3D dragger"><span><svg><path d="M1 5l3-3h12v12l-3 4H1z" fill="#5fb4dc"/><path d="M1 5h12v13H1z" fill="#eaf7fc" stroke="#4a9cc4"/><path d="M21 10h-6M18 7l-4 3 4 3z" stroke="#333" fill="#333"/></svg></span></button>
    </div>
    <svg class="solid" width="510" height="230" viewBox="863 736 510 230">
      <defs><linearGradient id="body" gradientUnits="userSpaceOnUse" x1="1108" y1="791" x2="1129.500" y2="912"><stop offset="0" stop-color="#fd8586"/><stop offset=".12" stop-color="#ff8b8b"/><stop offset=".3" stop-color="#ff9090"/><stop offset=".5" stop-color="#ff8283"/><stop offset=".71" stop-color="#ff7071"/><stop offset=".85" stop-color="#db6061"/><stop offset="1" stop-color="#e06565"/></linearGradient></defs>
      <path d="M899.700 828.300L1316.200 754.300A31.500 62 -8.800 0 1 1335.800 876.700L919.300 950.700z" fill="url(#body)"/>
      <path d="M1316.200 754.300A31.500 62 -8.800 0 1 1335.800 876.700" fill="none" stroke="#000" stroke-width="1.200"/>
      <ellipse cx="909.500" cy="889.500" rx="31.500" ry="62" transform="rotate(-8.800 909.500 889.500)" fill="#ff9090" stroke="#000" stroke-width="1.200"/>
    </svg>
    <div class="tols">X.X+-0.1<br>X.XX+-0.01<br>X.XXX+-0.001<br>ANG.+-0.5</div>
  </section>
</main>

<footer class="foot d-flex">
  <div class="d-flex align-items-end" style="padding:0 3px 4px 6px;gap:4px;width:90px">
    <button class="tog" aria-label="Show tree"><svg width="13" height="16"><use href="#orgtree"/></svg></button>
    <button class="tog" aria-label="Show browser"><svg width="18" height="18" viewBox="0 0 18 18"><circle cx="9" cy="9" r="6.500" fill="#3a9bd0"/><path d="M5 5q4-2 5 1t-4 4zM11 9l3 1-2 4z" fill="#d7f0fb"/><ellipse cx="9" cy="9" rx="9" ry="3.500" fill="none" stroke="#7b8084" transform="rotate(-55 9 9)"/></svg></button>
    <button class="plain" aria-label="Full screen" style="margin:0 0 3px 3px"><svg width="16" height="16"><rect x=".5" y=".5" width="15" height="15" fill="#e3f1f5" stroke="#2b7d9c"/></svg></button>
  </div>
  <i class="sep align-self-end mb-1" style="height:22px"></i>
  <ul class="msgs">
    <li><svg viewBox="0 0 12 12"><path d="M.7.7h10.600v10.600H.7z" fill="#a5dcf0" stroke="#17638a" stroke-width="1.400"/><path d="M7 1L3 6l5 5M10 1L6 6l4 5" fill="none" stroke="#17638a"/></svg>Feature regeneration failed.</li>
    <li><svg viewBox="0 0 12 12"><circle cx="5.500" cy="6" r="2.500" fill="#17638a"/></svg>4147-302_CORE_PIN_PHT regeneration completed with atypical feature or component status. Failed: 1. Child of Failed: 5.</li>
    <li><svg viewBox="0 0 12 12"><path d="M.7.7h10.600v10.600H.7z" fill="#a5dcf0" stroke="#17638a" stroke-width="1.400"/><path d="M7 1L3 6l5 5M10 1L6 6l4 5" fill="none" stroke="#17638a"/></svg>No relations have been defined for this model.</li>
    <li><svg viewBox="0 0 12 12"><circle cx="5.500" cy="6" r="2.500" fill="#17638a"/></svg>Purging tool path database ...</li>
    <li><svg viewBox="0 0 12 12"><circle cx="5.500" cy="6" r="2.500" fill="#17638a"/></svg>Tool path database purging is completed.</li>
  </ul>
  <div class="ms-auto d-flex align-items-center align-self-end" style="margin-bottom:3px;padding-right:3px">
    <i class="sep"></i>
    <button class="plain position-relative" aria-label="Notifications" style="margin:0 24px 0 7px"><svg width="12" height="18"><path d="M1 1v16" stroke="#777" stroke-width="1.500"/><path d="M1 1l11 4L1 9z" fill="#e0393b"/></svg><span class="position-absolute" style="left:5px;top:8px;font-size:9px;line-height:12px">6</span></button>
    <i class="sep"></i><i class="sep ms-1"></i>
    <div class="d-flex" style="margin:0 3px 0 2px"><button class="plain findbtn justify-content-center" aria-label="Find"><svg width="18" height="16"><use href="#bino"/></svg></button><button class="plain findbtn justify-content-center" aria-label="Find options"><svg class="caret"><use href="#dn"/></svg></button></div>
    <i class="sep"></i>
    <label for="filt" style="width:86px;margin-left:5px">1 selected</label>
    <span class="pick" style="width:165px"><select id="filt"><option>Geometry</option></select><svg class="caret"><use href="#dn"/></svg></span>
    <svg width="11" height="11" class="align-self-end" style="margin-left:4px"><path d="M1 11L11 1M5 11l6-6M9 11l2-2" stroke="#9fa3a6"/></svg>
  </div>
</footer>
</div>
</div>

<section class="setpanel d-flex" aria-label="Settings">
  <div style="width:275px;padding-top:24px">
    <h2>Collision Checking</h2>
    <div style="padding:7px 0 8px 12px">
      <label class="ck"><input type="checkbox" checked>Check holder against stock</label>
      <label class="ck"><input type="checkbox" checked>Check shaft against stock</label>
      <label class="ck"><input type="checkbox" checked>Check tool against fixture</label>
      <label class="ck"><input type="checkbox" checked>Check tool during rapid moves</label>
    </div>
    <h2>Tolerances</h2>
    <div style="padding:4px 0 2px 10px">
      <div class="tolrow d-flex align-items-center"><label for="t1">Safety distance</label><input id="t1" class="fld" value="1.0000"></div>
      <div class="tolrow d-flex align-items-center"><label for="t2">Collision tolerance</label><input id="t2" class="fld" value="0.0010"></div>
      <div class="tolrow d-flex align-items-center"><label for="t3">Interpolation tolerance</label><input id="t3" class="fld" value="1.0000"></div>
      <div class="tolrow d-flex align-items-center"><label for="t4">Saved STL tolerance</label><input id="t4" class="fld" value="0.1000"></div>
    </div>
    <div style="padding-left:6px">
      <h2>Model Import</h2>
      <div style="padding:7px 0 42px 12px">
        <label class="ck"><input type="checkbox">Treat assembled components as fixtures</label>
        <label class="ck" style="margin-top:9px"><input type="checkbox" checked>Suppress material removal features</label>
        <label class="ck" style="margin-top:2px"><input type="checkbox" checked>Use insert mode for suppression</label>
      </div>
    </div>
    <h2>Settings</h2>
    <div class="d-flex" style="padding:7px 0 0 10px;gap:49px"><button class="btnflat">Load settings</button><button class="btnflat">Save settings</button></div>
  </div>
  <div style="width:234px;padding-top:35px">
    <h2>Model quality</h2>
    <div style="padding:7px 0 10px 12px"><label class="ck"><input type="checkbox">Auto refinement</label></div>
    <h2>Rendering</h2>
    <div style="padding:10px 0 0 10px">
      <div class="d-flex align-items-center justify-content-between text-nowrap"><label for="ri">Refresh interval (in ms)</label><div class="spin d-flex"><input id="ri" class="fld" value="100"><div style="margin-left:-1px"><button aria-label="More"><svg><use href="#up"/></svg></button><button aria-label="Less"><svg><use href="#dn"/></svg></button></div></div></div>
      <div class="listbox" style="margin:6px 0">
        <table>
          <thead><tr><th>Item</th><th class="sw">Color</th></tr></thead>
          <tbody>
          <tr><td>Tool</td><td class="cw0"></td></tr><tr><td>Shaft</td><td class="cw1"></td></tr><tr><td>Holder</td><td class="cw2"></td></tr><tr><td>Stock</td><td class="cw3"></td></tr><tr><td>Target</td><td class="cw4"></td></tr><tr><td>Fixture</td><td class="cw1"></td></tr><tr><td>Collisions</td><td class="cw5"></td></tr><tr><td>Toolpath (Feed)</td><td class="cw6"></td></tr><tr><td>Toolpath (Rapid)</td><td class="cw7"></td></tr><tr><td>Toolpath (Axis)</td><td class="cw1"></td></tr>
          </tbody>
        </table>
      </div>
      <div class="d-flex align-items-center"><label for="tw" style="width:107px">Toolpath width</label><div class="spin d-flex"><input id="tw" class="fld" value="1.0"><div style="margin-left:-1px"><button aria-label="More"><svg><use href="#up"/></svg></button><button aria-label="Less"><svg><use href="#dn"/></svg></button></div></div></div>
      <label class="ck" style="margin:2px 0 0 2px"><input type="checkbox" checked>Show stock edges</label>
    </div>
  </div>
</section>

<div class="stage">
<section class="dlg" aria-label="Play Simulation">
  <div class="cap d-flex align-items-center justify-content-center">Play Simulation</div>
  <div class="mn d-flex align-items-center"><span>File</span><span>View</span></div>
  <button class="acc opened"><svg><path d="M0 3h12L6 9z"/></svg><span>CL Data</span></button>
  <div class="cldata">
    <table>
      <thead><tr><th class="num"></th><th></th></tr></thead>
      <tbody>
<tr class="sel"><td>1</td><td>$$*          Pro/CLfile  Version 7.0 - 7.0.2.0</td></tr>
<tr><td>2</td><td>$$-> MFGNO / 4147-302_CORE_PIN_PHT</td></tr>
<tr><td>3</td><td>PARTNO / 4147-302_CORE_PIN_PHT</td></tr>
<tr><td>4</td><td>$$-> FEATNO / 855</td></tr>
<tr><td>5</td><td>MACHIN / UNCX01, 22</td></tr>
<tr><td>6</td><td>$$-> CUTCOM_GEOMETRY_TYPE / OUTPUT</td></tr>
<tr><td>7</td><td>UNITS / INCHES</td></tr>
<tr><td>8</td><td>PPRINT / OPERATION NAME : M_4147-302</td></tr>
<tr><td>9</td><td>PPRINT / SEQUENCE TYPE : HOLEMAKING</td></tr>
<tr><td>10</td><td>PPRINT / SPINDLE SPEED : 11000.000000 RPM</td></tr>
<tr><td>11</td><td>PPRINT / CUT FEEDRATE &amp; UNITS : 5.000000</td></tr>
<tr><td>12</td><td>PPRINT / Z MINIMUM TOOL TRAVEL : -3.4</td></tr>
<tr><td>13</td><td>PPRINT / Z MAXIMUM TOOL TRAVEL : -2.</td></tr>
<tr><td>14</td><td>PPRINT / TOOL NAME : DRILL_CBD_0400_</td></tr>
<tr><td>15</td><td>LOADTL / 3</td></tr>
<tr><td>16</td><td>$$-> CUTTER / 0.040000</td></tr>
<tr><td>17</td><td>$$-> CSYS / 1.0000000000, 0.0000000000,</td></tr>
<tr><td></td><td>             0.0000000000, 1.0000000000, 0.0000</td></tr>
<tr><td></td><td>             0.0000000000, 0.0000000000, 1.0000</td></tr>
<tr><td>18</td><td>SPINDL / RPM, 11000.000000,  CLW</td></tr>
      </tbody>
    </table>
    <div class="sb d-flex" style="background:#dcdee0"><button aria-label="Scroll left" style="background:#f8f8f9"><svg><use href="#lf"/></svg></button><div style="width:232px;background:#fafafa;border:1px solid #c9cbcd;border-width:0 1px"></div></div>
  </div>
  <button class="acc"><svg><path d="M4 0l6 6-6 6z"/></svg><span>Sequence List</span></button>
  <button class="acc"><svg><path d="M4 0l6 6-6 6z"/></svg><span>Tool List</span></button>
  <button class="acc"><svg><path d="M4 0l6 6-6 6z"/></svg><span>NC Information</span></button>
  <button class="acc"><svg><path d="M4 0l6 6-6 6z"/></svg><span>Collision Report</span></button>
  <button class="acc"><svg><path d="M4 0l6 6-6 6z"/></svg><span>Gouge Report</span></button>
  <div class="play">
    <button aria-label="Restart"><svg viewBox="0 0 16 12"><path d="M5 3.500a4.500 4.500 0 1 0 4-2" fill="none" stroke="#666" stroke-width="1.500"/><path d="M9 -1v5L6 1.500z" fill="#666"/></svg></button>
    <button class="stop" aria-label="Stop"><svg viewBox="0 0 16 12"><path d="M2.500.5h11v11h-11z" fill="#999"/></svg></button>
    <button class="go" aria-label="Play"></button>
    <button aria-label="To start"><svg viewBox="0 0 16 12"><path d="M1 0h1v12H1zM8.500 1v10L3 6zM15 1v10L9.500 6z"/></svg></button>
    <button aria-label="Rewind"><svg viewBox="0 0 16 12"><path d="M7.500 1v10L2 6zM14 1v10L8.500 6z"/></svg></button>
    <button aria-label="Forward"><svg viewBox="0 0 16 12"><path d="M2 1v10l5.500-5zM8.500 1v10L14 6z"/></svg></button>
    <button aria-label="To end"></button>
  </div>
  <div class="hair"></div>
  <div style="padding:8px 4px 7px"><label for="spd">Display Speed</label></div>
  <input id="spd" class="speed" type="range" min="0" max="100" value="50">
  <div style="padding:5px 0 3px 42px">Slow</div>
  <div class="hair"></div>
  <div class="text-center" style="padding-top:9px"><button class="btnflat">Close</button></div>
</section>
</div>

<svg class="mouse" width="12" height="18" viewBox="0 0 12 18"><path d="M1 0v14l3-3 3 6 2-1-3-6h4z" fill="#000" stroke="#fff" stroke-width=".6"/></svg>
<svg class="callout" width="100" height="160" viewBox="512 628 100 160"><path d="M522 634L549 654 540 659 544 667 535 672 531 663 522 667z" fill="#ff4040"/><path d="M545 678L557.500 705M563 714L575 741M581 750L583 754" stroke="#ff4040" stroke-width="10"/><path d="M583 754L592 773" stroke="#ff4040" stroke-width="10" stroke-linecap="round"/></svg>
</body>
</html>
